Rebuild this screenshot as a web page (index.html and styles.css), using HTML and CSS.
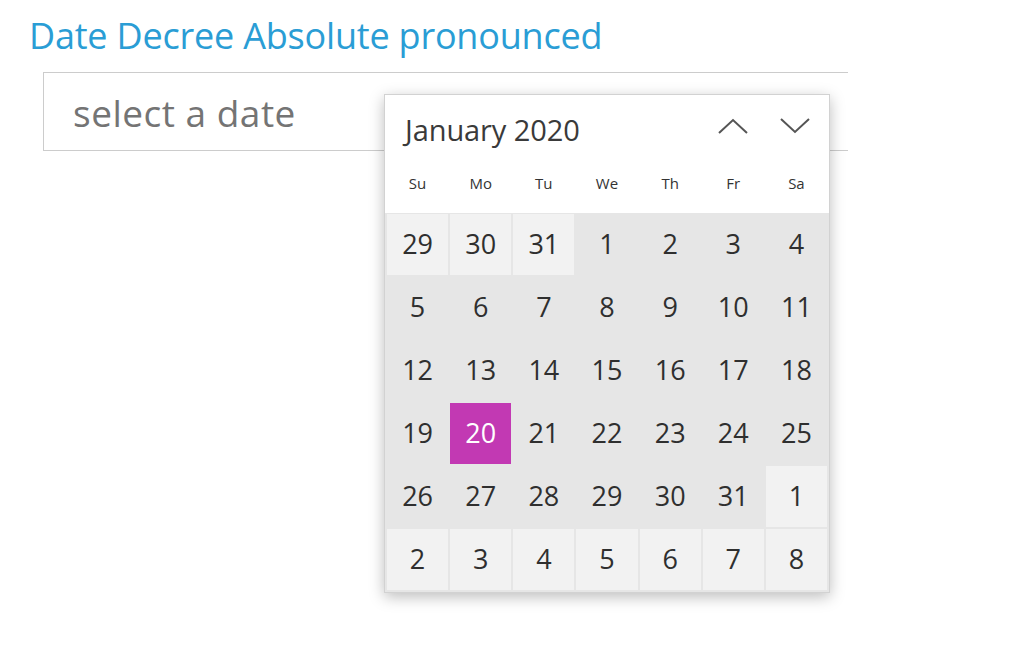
FILE: index.html
```html
<!DOCTYPE html>
<html>
<head>
<meta charset="utf-8">
<link rel="stylesheet" href="styles.css">
</head>
<body>
<div class="page">
  <div class="title">Date Decree Absolute pronounced</div>
  <div class="field"><span class="placeholder">select a date</span></div>

  <div class="popup">
    <div class="popup-head">
      <div class="month-row">
        <span class="month">January 2020</span>
        <div class="navs">
          <span class="nav"><svg width="32" height="18" viewBox="0 0 32 18"><polyline points="2,16 16,3 30,16" fill="none" stroke="#555" stroke-width="2"/></svg></span>
          <span class="nav"><svg width="32" height="18" viewBox="0 0 32 18"><polyline points="2,2 16,15 30,2" fill="none" stroke="#555" stroke-width="2"/></svg></span>
        </div>
      </div>
      <div class="weekdays">
        <span>Su</span><span>Mo</span><span>Tu</span><span>We</span><span>Th</span><span>Fr</span><span>Sa</span>
      </div>
    </div>
    <div class="days">
      <span class="day out">29</span><span class="day out">30</span><span class="day out">31</span><span class="day">1</span><span class="day">2</span><span class="day">3</span><span class="day">4</span>
      <span class="day">5</span><span class="day">6</span><span class="day">7</span><span class="day">8</span><span class="day">9</span><span class="day">10</span><span class="day">11</span>
      <span class="day">12</span><span class="day">13</span><span class="day">14</span><span class="day">15</span><span class="day">16</span><span class="day">17</span><span class="day">18</span>
      <span class="day">19</span><span class="day selected">20</span><span class="day">21</span><span class="day">22</span><span class="day">23</span><span class="day">24</span><span class="day">25</span>
      <span class="day">26</span><span class="day">27</span><span class="day">28</span><span class="day">29</span><span class="day">30</span><span class="day">31</span><span class="day out">1</span>
      <span class="day out">2</span><span class="day out">3</span><span class="day out">4</span><span class="day out">5</span><span class="day out">6</span><span class="day out">7</span><span class="day out">8</span>
    </div>
  </div>
</div>
</body>
</html>
```
FILE: styles.css
```css
html, body {
  margin: 0;
  padding: 0;
  background: #fff;
}
body {
  font-family: "Open Sans", "Noto Sans", sans-serif;
  color: #333;
}
.page {
  position: relative;
  width: 1012px;
  height: 655px;
}
.title {
  padding: 14px 0 0 29px;
  font-size: 36px;
  line-height: 44px;
  color: #2a9dd5;
  letter-spacing: -0.2px;
  white-space: nowrap;
}
.field {
  margin: 14px 0 0 43px;
  width: 805px;
  height: 79px;
  border: 1px solid #cccccc;
  border-right: none;
  box-sizing: border-box;
  display: flex;
  align-items: center;
  padding-left: 29px;
}
.placeholder {
  font-size: 37px;
  color: #747474;
  letter-spacing: 0.5px;
  margin-top: 2px;
}
.popup {
  position: absolute;
  left: 384px;
  top: 94px;
  width: 446px;
  box-sizing: border-box;
  border: 1px solid #d2d2d2;
  background: #e6e6e6;
  box-shadow: 0 4px 14px rgba(0, 0, 0, 0.26);
}
.popup-head {
  background: #fff;
  height: 118px;
  display: flex;
  flex-direction: column;
}
.month-row {
  display: flex;
  align-items: center;
  justify-content: space-between;
  height: 68px;
  padding: 0 18px 0 20px;
}
.month {
  font-size: 29px;
  color: #3a3a3a;
  letter-spacing: -0.1px;
}
.navs {
  display: flex;
  gap: 30px;
  margin-top: -6px;
}
.nav svg {
  display: block;
}
.weekdays {
  display: grid;
  grid-template-columns: repeat(7, 1fr);
  gap: 2px;
  padding: 0 2px;
  font-size: 15px;
  color: #333;
  text-align: center;
  margin-top: 10px;
}
.days {
  display: grid;
  grid-template-columns: repeat(7, 1fr);
  grid-auto-rows: 61px;
  gap: 2px;
  padding: 1px 2px 2px 2px;
}
.day {
  display: flex;
  align-items: center;
  justify-content: center;
  font-size: 27px;
  color: #2f2f2f;
  padding-bottom: 2px;
  box-sizing: border-box;
}
.day.out {
  background: #f2f2f2;
}
.day.selected {
  background: #c239b3;
  color: #fff;
}
```
